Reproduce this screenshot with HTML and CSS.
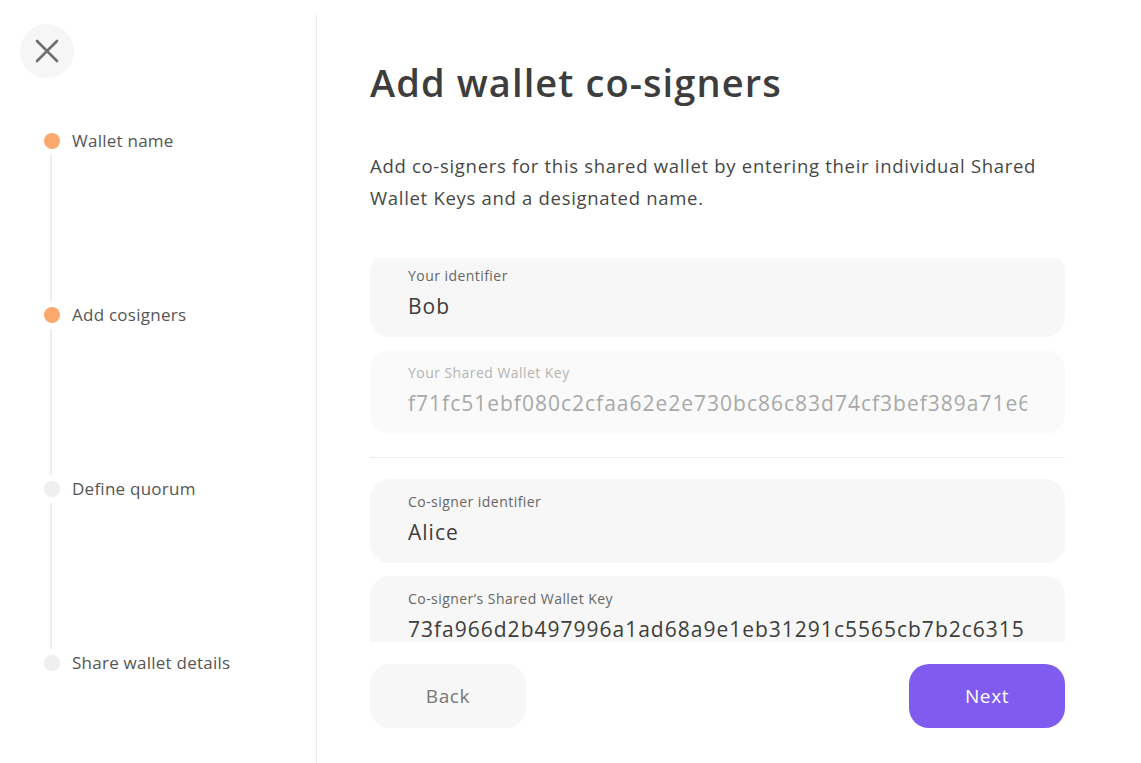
FILE: index.html
```html
<!DOCTYPE html>
<html lang="en">
<head>
<meta charset="utf-8">
<title>Add wallet co-signers</title>
<link rel="stylesheet" href="styles.css">
</head>
<body>
<div class="layout">
  <aside class="sidebar">
    <button class="close" aria-label="Close">
      <svg width="26" height="26" viewBox="0 0 26 26"><path d="M3 3 L23 23 M23 3 L3 23" stroke="#6f6f6f" stroke-width="2.6" stroke-linecap="round" fill="none"/></svg>
    </button>
    <ol class="steps">
      <li class="step done">
        <div class="step-row"><span class="dot"></span><span class="step-label">Wallet name</span></div>
        <div class="connector"></div>
      </li>
      <li class="step done">
        <div class="step-row"><span class="dot"></span><span class="step-label">Add cosigners</span></div>
        <div class="connector"></div>
      </li>
      <li class="step">
        <div class="step-row"><span class="dot"></span><span class="step-label">Define quorum</span></div>
        <div class="connector"></div>
      </li>
      <li class="step">
        <div class="step-row"><span class="dot"></span><span class="step-label">Share wallet details</span></div>
      </li>
    </ol>
  </aside>
  <main class="main">
    <h1 class="title">Add wallet co-signers</h1>
    <p class="desc">Add co-signers for this shared wallet by entering their individual Shared Wallet Keys and a designated name.</p>
    <div class="form-scroll">
      <div class="form-inner">
        <div class="field">
          <div class="field-label">Your identifier</div>
          <div class="field-value">Bob</div>
        </div>
        <div class="field disabled">
          <div class="field-label">Your Shared Wallet Key</div>
          <div class="field-value">f71fc51ebf080c2cfaa62e2e730bc86c83d74cf3bef389a71e6c4f2d1a9b</div>
        </div>
        <div class="divider"></div>
        <div class="field">
          <div class="field-label">Co-signer identifier</div>
          <div class="field-value">Alice</div>
        </div>
        <div class="field">
          <div class="field-label">Co-signer’s Shared Wallet Key</div>
          <div class="field-value">73fa966d2b497996a1ad68a9e1eb31291c5565cb7b2c6315</div>
        </div>
      </div>
    </div>
    <div class="actions">
      <button class="btn btn-back">Back</button>
      <button class="btn btn-next">Next</button>
    </div>
  </main>
</div>
</body>
</html>
```

FILE: styles.css
```css
* { box-sizing: border-box; }
html, body { margin: 0; padding: 0; background: #fff; }
body {
  font-family: "Open Sans", "Liberation Sans", sans-serif;
  color: #3d3d3d;
  width: 1141px;
  height: 763px;
  overflow: hidden;
}
.layout {
  display: flex;
  height: 763px;
}
.sidebar {
  width: 317px;
  flex: none;
  margin-top: 13px;
  border-right: 1px solid #ececec;
  padding: 11px 0 0 20px;
}
.close {
  width: 54px;
  height: 54px;
  border-radius: 50%;
  border: none;
  background: #f6f6f6;
  display: flex;
  align-items: center;
  justify-content: center;
  padding: 0;
}
.steps {
  list-style: none;
  margin: 53px 0 0 24px;
  padding: 0;
}
.step-row {
  display: flex;
  align-items: center;
  height: 20px;
}
.dot {
  width: 16px;
  height: 16px;
  border-radius: 50%;
  background: #efefef;
  flex: none;
}
.step.done .dot { background: #fba86c; }
.step-label {
  margin-left: 12px;
  font-size: 17px;
  color: #555;
  letter-spacing: 0.25px;
  position: relative;
  top: -1px;
}
.connector {
  width: 2px;
  height: 146px;
  margin: 4px 0 4px 6px;
  background: #ececec;
}
.main {
  flex: none;
  width: 695px;
  margin-left: 53px;
  display: flex;
  flex-direction: column;
}
.title {
  margin: 57px 0 0;
  font-size: 38px;
  font-weight: 600;
  color: #3d3d3d;
  line-height: 50px;
  letter-spacing: 1.1px;
}
.desc {
  margin: 43px 0 0;
  font-size: 18.5px;
  line-height: 32px;
  color: #474747;
  letter-spacing: 0.7px;
}
.form-scroll {
  margin-top: 44px;
  height: 384px;
  overflow: hidden;
}
.form-inner {
  margin-top: -5px;
  display: flex;
  flex-direction: column;
  gap: 13px;
}
.field {
  flex: none;
  background: #f7f7f7;
  border-radius: 20px;
  padding: 14px 38px 0;
  height: 84px;
}
.field.disabled { background: #fafafa; }
.field-label {
  font-size: 14px;
  line-height: 18px;
  color: #666;
  letter-spacing: 0.45px;
}
.field-value {
  margin-top: 8px;
  font-size: 21px;
  line-height: 27px;
  color: #3d3d3d;
  white-space: nowrap;
  overflow: hidden;
  letter-spacing: 1px;
}
.field.disabled .field-label { color: #b4b4b4; }
.field.disabled .field-value { color: #a8a8a8; }
.divider {
  flex: none;
  height: 1px;
  background: #ececec;
  margin: 10px 0 8px;
}
.actions {
  margin-top: 22px;
  display: flex;
  justify-content: space-between;
}
.btn {
  width: 156px;
  height: 64px;
  border-radius: 20px;
  border: none;
  font-family: inherit;
  font-size: 19px;
  letter-spacing: 0.6px;
}
.btn-back { background: #f7f7f7; color: #777; }
.btn-next { background: #7f5bf0; color: #fff; }
```
